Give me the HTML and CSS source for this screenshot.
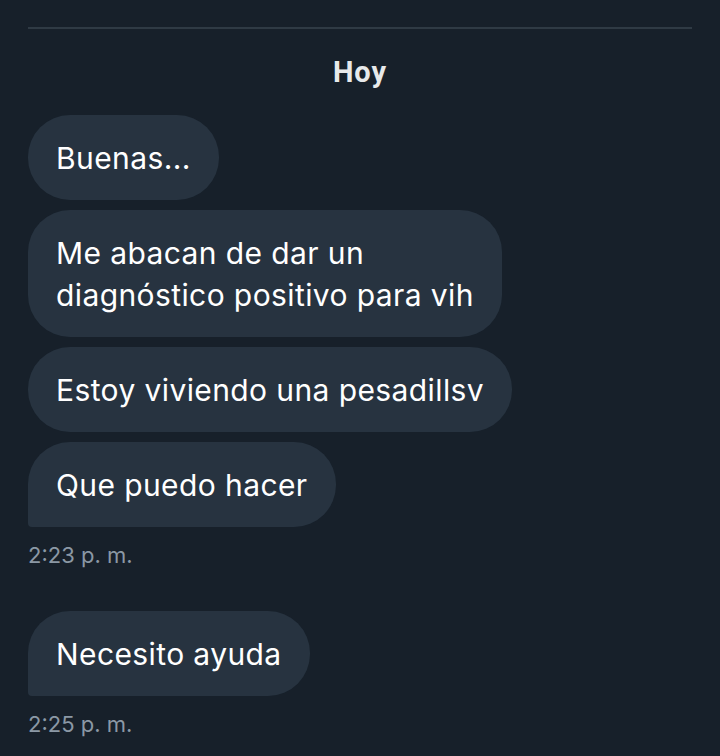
FILE: index.html
```html
<!DOCTYPE html>
<html lang="es">
<head>
  <meta charset="UTF-8">
  <meta name="viewport" content="width=device-width, initial-scale=1.0">
  <title>Mensajes</title>
  <link rel="stylesheet" href="styles.css">
</head>
<body>
  <div class="chat">
    <hr class="divider">
    <div class="day">Hoy</div>

    <!-- Grupo 1 -->
    <div class="group">
      <div class="bubble">Buenas...</div>
      <div class="bubble">Me abacan de dar un<br>diagnóstico positivo para vih</div>
      <div class="bubble">Estoy viviendo una pesadillsv</div>
      <div class="bubble last">Que puedo hacer</div>
      <div class="time">2:23 p. m.</div>
    </div>

    <!-- Grupo 2 -->
    <div class="group">
      <div class="bubble last">Necesito ayuda</div>
      <div class="time">2:25 p. m.</div>
    </div>
  </div>
</body>
</html>
```

FILE: styles.css
```css
:root {
  --bg: #17202a;
  --bubble: #273340;
  --text: #ffffff;
  --muted: #8b98a5;
  --line: #2f3a44;
}
* { margin: 0; padding: 0; box-sizing: border-box; }
body {
  background: var(--bg);
  color: var(--text);
  font-family: Inter, "Noto Sans", sans-serif;
  height: 756px;
  overflow: hidden;
}
.chat {
  padding: 27px 28px 0;
}
.divider {
  border: none;
  border-top: 2px solid var(--line);
}
.day {
  text-align: center;
  font-family: Roboto, sans-serif;
  font-weight: bold;
  font-size: 29px;
  letter-spacing: 1px;
  color: #e7e9ea;
  padding: 28px 0 28px;
  line-height: 30px;
}
.group {
  display: flex;
  flex-direction: column;
  align-items: flex-start;
  gap: 10px;
  margin-bottom: 41px;
}
.bubble {
  background: var(--bubble);
  border-radius: 42px;
  padding: 22px 28px 21px;
  font-size: 30px;
  line-height: 42px;
  letter-spacing: 0.4px;
}
.bubble.last { border-bottom-left-radius: 4px; }
.time {
  color: var(--muted);
  font-size: 22px;
  line-height: 30px;
  margin-top: 3px;
}
```
